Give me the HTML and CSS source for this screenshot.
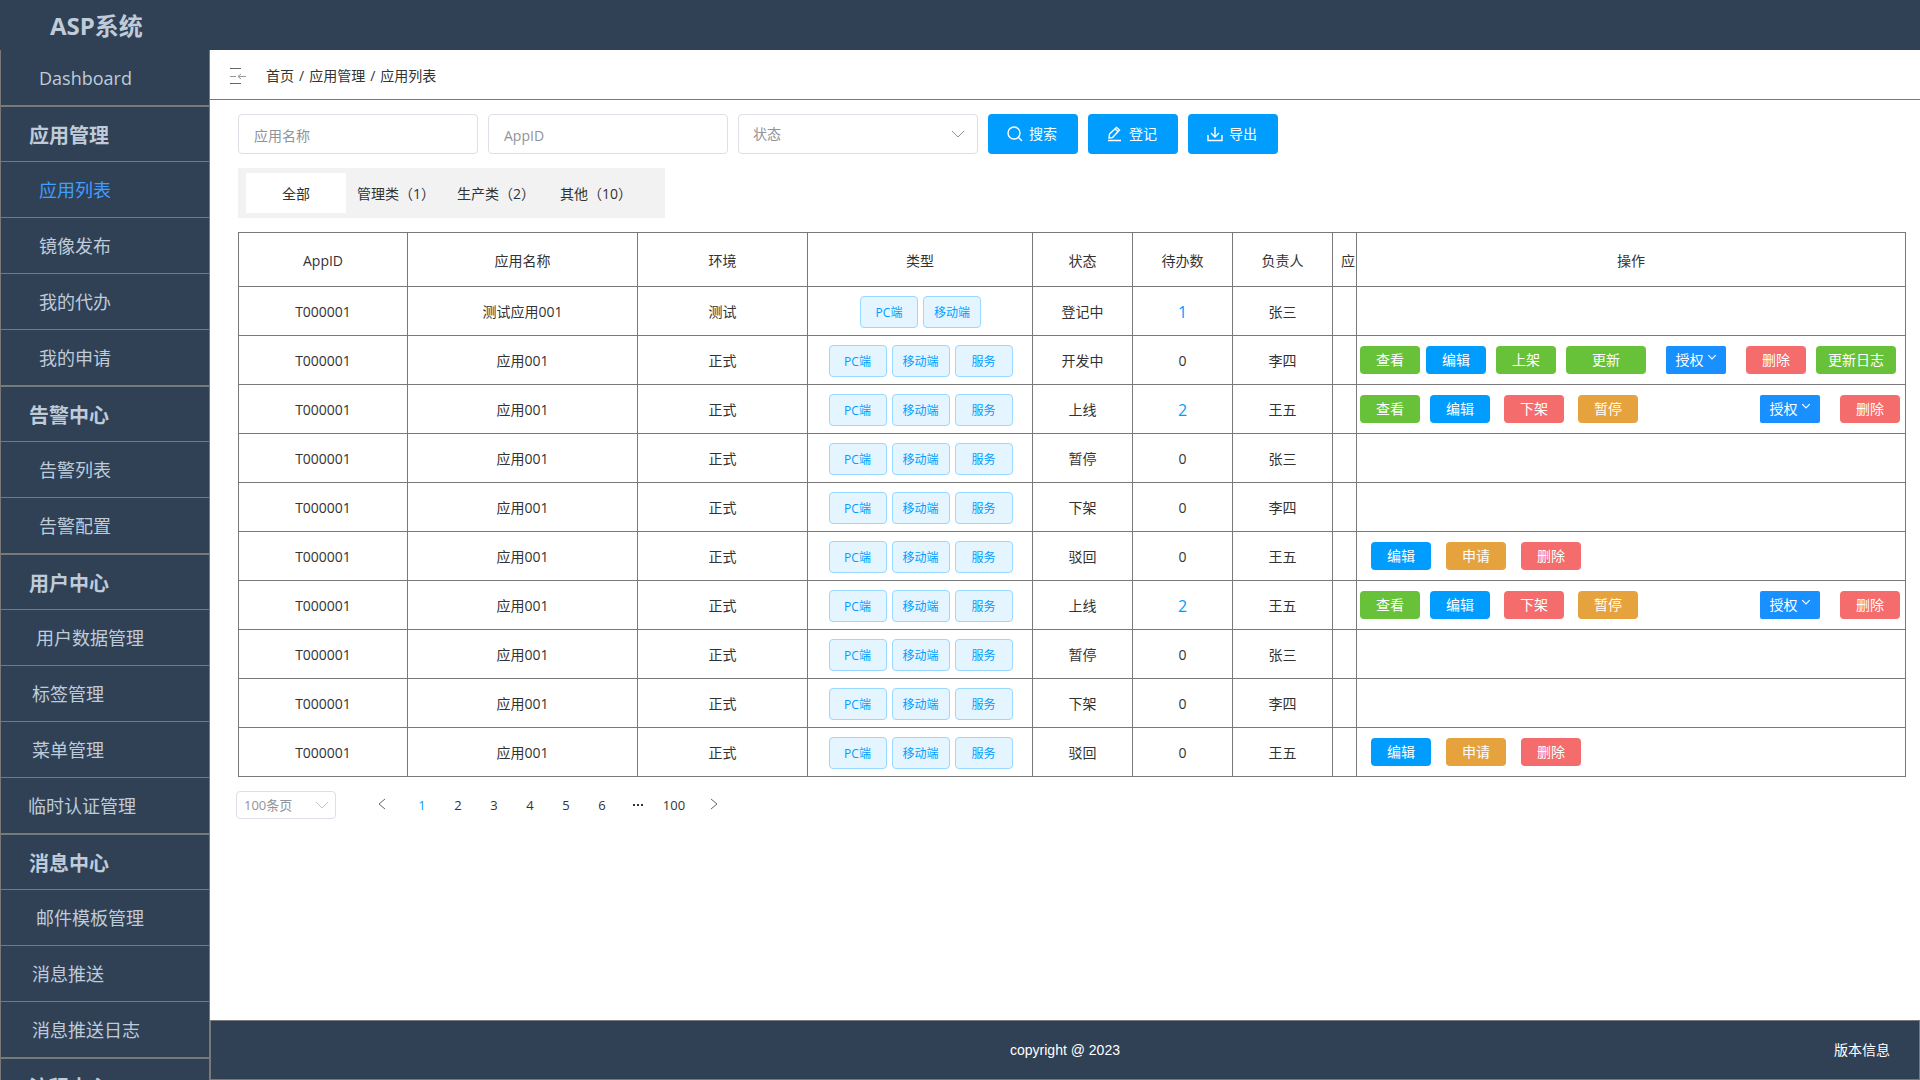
FILE: index.html
```html
<!DOCTYPE html>
<html lang="zh-CN">
<head>
<meta charset="utf-8">
<title>ASP系统</title>
<link rel="stylesheet" href="styles.css">
</head>
<body>
<svg class="defs" aria-hidden="true">
  <symbol id="down" viewBox="0 0 16 10"><path d="M2 2l6 6 6-6"/></symbol>
</svg>
<div class="app">
  <header class="topbar"><h1 class="brand">ASP系统</h1></header>
  <div class="body">
    <nav class="sidebar">
      <a class="item indent-4" href="#">Dashboard</a>
      <h2 class="group">应用管理</h2>
      <a class="item indent-4 active" href="#">应用列表</a>
      <a class="item indent-4" href="#">镜像发布</a>
      <a class="item indent-4" href="#">我的代办</a>
      <a class="item indent-4" href="#">我的申请</a>
      <h2 class="group">告警中心</h2>
      <a class="item indent-4" href="#">告警列表</a>
      <a class="item indent-4" href="#">告警配置</a>
      <h2 class="group">用户中心</h2>
      <a class="item indent-3" href="#">用户数据管理</a>
      <a class="item indent-2" href="#">标签管理</a>
      <a class="item indent-2" href="#">菜单管理</a>
      <a class="item indent-1" href="#">临时认证管理</a>
      <h2 class="group">消息中心</h2>
      <a class="item indent-3" href="#">邮件模板管理</a>
      <a class="item indent-2" href="#">消息推送</a>
      <a class="item indent-2" href="#">消息推送日志</a>
      <h2 class="group">流程中心</h2>
    </nav>
    <div class="main">
      <div class="crumbs">
        <svg class="fold" viewBox="0 0 16 16" aria-hidden="true"><path d="M0 .5h11M0 15.500h11"/><path class="soft" d="M0 8.500h6M8 8.500h8M11 6l-3 2.500 3 2.500"/></svg>
        <nav class="trail"><a href="#">首页</a><span>/</span><a href="#">应用管理</a><span>/</span><a href="#">应用列表</a></nav>
      </div>
      <main class="content">
        <form class="filters">
          <input class="field" type="text" placeholder="应用名称" aria-label="应用名称">
          <input class="field" type="text" placeholder="AppID" aria-label="AppID">
          <div class="pick pick-lg">
            <select aria-label="状态"><option>状态</option></select>
            <svg class="caret" aria-hidden="true"><use href="#down"/></svg>
          </div>
          <button class="primary" type="button"><svg viewBox="0 0 16 16" aria-hidden="true"><circle cx="7" cy="7" r="6"/><path d="M11.500 11.500l3.500 3.500"/></svg>搜索</button>
          <button class="primary" type="button"><svg viewBox="0 0 16 16" aria-hidden="true"><path d="M2 12l.5-4L9.500 1.500l3 2.500-7 7.500zM8 3l3 2.500M1 14.500h13"/></svg>登记</button>
          <button class="primary" type="button"><svg viewBox="0 0 16 16" aria-hidden="true"><path d="M8 1v10M4 7l4 4 4-4M1 9v5.500h14V9"/></svg>导出</button>
        </form>
        <div class="tabs">
          <button class="tab on" type="button">全部</button>
          <button class="tab" type="button">管理类（1）</button>
          <button class="tab" type="button">生产类（2）</button>
          <button class="tab" type="button">其他（10）</button>
        </div>
        <table class="grid">
          <colgroup><col class="c-id"><col class="c-name"><col class="c-env"><col class="c-type"><col class="c-sm"><col class="c-sm"><col class="c-sm"><col class="c-cut"><col></colgroup>
          <thead><tr><th>AppID</th><th>应用名称</th><th>环境</th><th>类型</th><th>状态</th><th>待办数</th><th>负责人</th><th class="cut">应</th><th>操作</th></tr></thead>
          <tbody>
            <tr><td>T000001</td><td>测试应用001</td><td>测试</td><td><div class="tags"><span>PC端</span><span>移动端</span></div></td><td>登记中</td><td><a class="todo" href="#">1</a></td><td>张三</td><td></td><td></td></tr>
            <tr><td>T000001</td><td>应用001</td><td>正式</td><td><div class="tags"><span>PC端</span><span>移动端</span><span>服务</span></div></td><td>开发中</td><td>0</td><td>李四</td><td></td><td><div class="ops ops-dev"><div class="pair"><button class="btn green">查看</button><button class="btn blue">编辑</button></div><button class="btn green">上架</button><button class="btn green wide">更新</button><button class="btn grant">授权<svg aria-hidden="true"><use href="#down"/></svg></button><button class="btn red">删除</button><button class="btn green wide">更新日志</button></div></td></tr>
            <tr><td>T000001</td><td>应用001</td><td>正式</td><td><div class="tags"><span>PC端</span><span>移动端</span><span>服务</span></div></td><td>上线</td><td><a class="todo" href="#">2</a></td><td>王五</td><td></td><td><div class="ops ops-live"><div class="pair"><button class="btn green">查看</button><button class="btn blue">编辑</button></div><button class="btn red">下架</button><button class="btn orange">暂停</button><div class="pair end"><button class="btn grant">授权<svg aria-hidden="true"><use href="#down"/></svg></button><button class="btn red">删除</button></div></div></td></tr>
            <tr><td>T000001</td><td>应用001</td><td>正式</td><td><div class="tags"><span>PC端</span><span>移动端</span><span>服务</span></div></td><td>暂停</td><td>0</td><td>张三</td><td></td><td></td></tr>
            <tr><td>T000001</td><td>应用001</td><td>正式</td><td><div class="tags"><span>PC端</span><span>移动端</span><span>服务</span></div></td><td>下架</td><td>0</td><td>李四</td><td></td><td></td></tr>
            <tr><td>T000001</td><td>应用001</td><td>正式</td><td><div class="tags"><span>PC端</span><span>移动端</span><span>服务</span></div></td><td>驳回</td><td>0</td><td>王五</td><td></td><td><div class="ops ops-back"><button class="btn blue">编辑</button><button class="btn orange">申请</button><button class="btn red">删除</button></div></td></tr>
            <tr><td>T000001</td><td>应用001</td><td>正式</td><td><div class="tags"><span>PC端</span><span>移动端</span><span>服务</span></div></td><td>上线</td><td><a class="todo" href="#">2</a></td><td>王五</td><td></td><td><div class="ops ops-live"><div class="pair"><button class="btn green">查看</button><button class="btn blue">编辑</button></div><button class="btn red">下架</button><button class="btn orange">暂停</button><div class="pair end"><button class="btn grant">授权<svg aria-hidden="true"><use href="#down"/></svg></button><button class="btn red">删除</button></div></div></td></tr>
            <tr><td>T000001</td><td>应用001</td><td>正式</td><td><div class="tags"><span>PC端</span><span>移动端</span><span>服务</span></div></td><td>暂停</td><td>0</td><td>张三</td><td></td><td></td></tr>
            <tr><td>T000001</td><td>应用001</td><td>正式</td><td><div class="tags"><span>PC端</span><span>移动端</span><span>服务</span></div></td><td>下架</td><td>0</td><td>李四</td><td></td><td></td></tr>
            <tr><td>T000001</td><td>应用001</td><td>正式</td><td><div class="tags"><span>PC端</span><span>移动端</span><span>服务</span></div></td><td>驳回</td><td>0</td><td>王五</td><td></td><td><div class="ops ops-back"><button class="btn blue">编辑</button><button class="btn orange">申请</button><button class="btn red">删除</button></div></td></tr>
          </tbody>
        </table>
        <div class="pager">
          <div class="pick pick-sm">
            <select aria-label="每页条数"><option>100条页</option></select>
            <svg class="caret" aria-hidden="true"><use href="#down"/></svg>
          </div>
          <div class="pages">
            <button class="step" type="button" aria-label="上一页"><svg viewBox="0 0 8 12" aria-hidden="true"><path d="M7 1L1 6l6 5"/></svg></button>
            <button class="current" type="button">1</button>
            <button type="button">2</button>
            <button type="button">3</button>
            <button type="button">4</button>
            <button type="button">5</button>
            <button type="button">6</button>
            <button type="button" aria-label="更多页"><svg class="dots" viewBox="0 0 12 4" aria-hidden="true"><path d="M1 1h2v2H1zM5 1h2v2H5zM9 1h2v2H9z"/></svg></button>
            <button type="button">100</button>
            <button class="step" type="button" aria-label="下一页"><svg viewBox="0 0 8 12" aria-hidden="true"><path d="M1 1l6 5-6 5"/></svg></button>
          </div>
        </div>
      </main>
      <footer class="footer"><span></span><span>copyright @ 2023</span><a href="#">版本信息</a></footer>
    </div>
  </div>
</div>
</body>
</html>
```
FILE: styles.css
```css
* { box-sizing: border-box; }
body {
  margin: 0;
  font: 14px/20px "Open Sans", "Noto Sans CJK SC", sans-serif;
  color: #333;
  background: #fff;
}
a { color: inherit; text-decoration: none; }
button, input, select { font: inherit; color: inherit; }
button { border: 0; padding: 0; background: none; cursor: pointer; }
svg { fill: none; stroke: currentColor; }
.defs { display: none; }

.app { display: flex; flex-direction: column; height: 100vh; overflow: hidden; }
.topbar { flex: none; height: 50px; padding: 2px 50px 0; display: flex; align-items: center; background: #304156; }
.brand { margin: 0; font-size: 24px; line-height: 32px; color: #bfcbd9; }
.body { flex: 1; min-height: 0; display: flex; }

.sidebar {
  flex: none;
  width: 210px;
  overflow: hidden;
  background: #304156;
  color: #bfcbd9;
  border: solid #797979;
  border-width: 0 1px;
}
.item, .group {
  display: flex;
  align-items: center;
  height: 56px;
  margin: 0;
  border-bottom: 1px solid #797979;
  font-size: 18px;
  line-height: 24px;
}
.group { padding: 3px 0 0 28px; border-top: 1px solid #797979; font-size: 20px; font-weight: 700; }
.indent-1 { padding-left: 27px; }
.indent-2 { padding-left: 31px; }
.indent-3 { padding-left: 35px; }
.indent-4 { padding-left: 38px; }
.active { color: #409eff; }

.main { flex: 1; min-width: 0; display: flex; flex-direction: column; }
.crumbs { flex: none; height: 50px; padding: 2px 20px 0; display: flex; align-items: center; gap: 20px; border-bottom: 1px solid #797979; }
.trail { display: flex; gap: 5px; }
.fold { width: 16px; height: 16px; color: #666; }
.soft { stroke: #999; }
.content { flex: 1; min-height: 0; padding: 14px 14px 14px 28px; display: flex; flex-direction: column; align-items: flex-start; gap: 14px; }

.filters { display: flex; gap: 10px; }
.field, .pick-lg { width: 240px; height: 40px; }
.field, .pick select { border: 1px solid #dcdfe6; border-radius: 4px; background: #fff; }
.field { padding: 2px 15px 0; }
.field::placeholder { color: #909399; opacity: 1; }
.pick { display: grid; align-items: center; color: #909399; }
.pick > * { grid-area: 1 / 1; }
.pick select { appearance: none; width: 100%; height: 100%; padding: 0 14px; }
.caret { justify-self: end; width: 16px; height: 10px; margin-right: 12px; pointer-events: none; }
.primary {
  display: flex;
  align-items: center;
  justify-content: center;
  gap: 6px;
  width: 90px;
  height: 40px;
  padding-right: 2px;
  border-radius: 4px;
  background: #009dff;
  color: #fff;
}
.primary svg { width: 16px; height: 16px; stroke-width: 1.4; }

.tabs { display: flex; padding: 5px 19px 5px 8px; background: #f2f2f2; }
.tab { width: 100px; height: 40px; padding-top: 2px; white-space: nowrap; }
.tab.on { background: #fff; }

.grid { width: 100%; table-layout: fixed; border-collapse: collapse; text-align: center; }
.grid th, .grid td { height: 49px; padding: 2px 0 0; border: 1px solid #797979; font-weight: 400; }
.grid th { height: 54px; }
.grid td:last-child { padding: 0; }
.c-id { width: 169px; }
.c-name { width: 230px; }
.c-env { width: 170px; }
.c-type { width: 225px; }
.c-sm { width: 100px; }
.c-cut { width: 24px; }
.grid .cut { padding-left: 7px; overflow: hidden; white-space: nowrap; }
.todo { font-size: 16px; color: #009dff; }
.tags { display: flex; justify-content: center; gap: 5px; padding-left: 1px; }
.tags span { width: 58px; height: 32px; border: 1px solid #99d8ff; border-radius: 4px; background: #e5f5ff; color: #009dff; font-size: 12px; line-height: 32px; }

.ops, .pair { display: flex; align-items: center; }
.ops { padding: 0 5px 0 3px; }
.ops-dev { gap: 10px; }
.ops-dev .pair { gap: 6px; }
.ops-dev .grant { margin: 0 10px; }
.ops-live { gap: 14px; }
.ops-live .pair { gap: 10px; }
.ops-live .end { gap: 20px; margin-left: auto; }
.ops-back { gap: 15px; padding-left: 14px; }
.btn { width: 60px; height: 28px; border-radius: 4px; color: #fff; white-space: nowrap; }
.btn.wide { width: 80px; }
.green { background: #67c23a; }
.blue { background: #009dff; }
.red { background: #f56c6c; }
.orange { background: #e6a23c; }
.grant { display: flex; align-items: center; justify-content: center; gap: 3px; border-radius: 2px; background: #1890ff; }
.grant svg { width: 10px; height: 10px; margin-bottom: 6px; stroke-width: 2; }

.pager { display: flex; align-items: center; gap: 24px; margin-left: -2px; font-size: 13px; }
.pick-sm { width: 100px; height: 28px; }
.pick-sm select { padding: 0 7px; }
.pick-sm .caret { margin-right: 6px; color: #c0c4cc; }
.pages { display: flex; }
.pages button { width: 36px; height: 28px; display: flex; align-items: center; justify-content: center; }
.pages .step { width: 44px; padding-bottom: 2px; }
.pages svg { width: 8px; height: 12px; color: #666; }
.pages .dots { width: 12px; height: 4px; fill: #333; stroke: none; }
.pages .current { color: #009dff; }

.footer {
  flex: none;
  height: 60px;
  padding: 0 29px;
  display: grid;
  grid-template-columns: 1fr auto 1fr;
  align-items: center;
  border: 1px solid #797979;
  background: #304156;
  color: #fff;
  font-family: "Liberation Sans", "Noto Sans CJK SC", sans-serif;
}
.footer a { justify-self: end; }
```
